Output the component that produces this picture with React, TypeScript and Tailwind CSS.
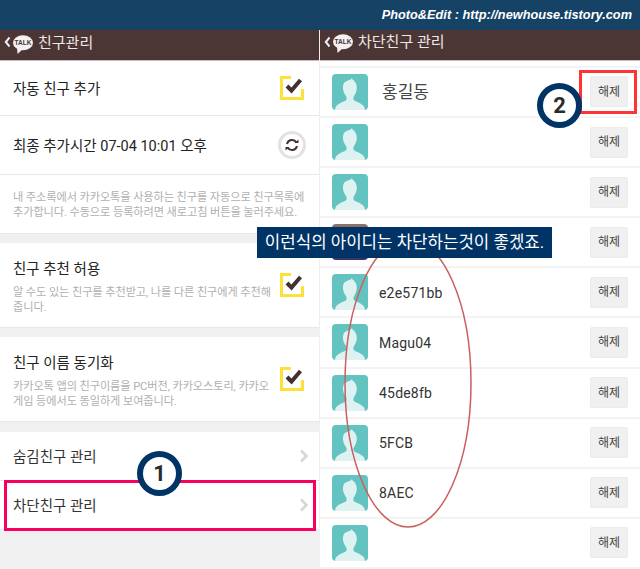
import type { ReactNode } from "react"

const KR = "font-['Roboto','Noto_Sans_CJK_KR',sans-serif]"

function TalkHeader({ title }: { title: string }) {
  return (
    <div className="flex h-[31px] items-center border-b border-[#c9bdbd] bg-[#4b3535] pb-1 pl-1">
      <svg width="7" height="12" viewBox="0 0 7 12" className="mb-[2px]">
        <path d="M5.500 1.500 L1.800 6 L5.500 10.500" fill="none" stroke="#eee" strokeWidth="2" />
      </svg>
      <svg width="22" height="20" viewBox="0 0 22 20" className="ml-[1px] mr-[4px] mt-[3px]">
        <ellipse cx="11" cy="7.800" rx="10" ry="7.500" fill="#f4f1f0" />
        <path d="M5 12 L5.500 19 L11 14 Z" fill="#f4f1f0" />
        <text
          x="11"
          y="10"
          textAnchor="middle"
          className="font-['Liberation_Sans',sans-serif] text-[6.500px] font-bold"
          fill="#4b3535"
        >
          TALK
        </text>
      </svg>
      <span className="text-[15px] leading-none text-[#ece8e7]">{title}</span>
    </div>
  )
}

function CheckMark() {
  return (
    <svg width="24" height="24" viewBox="0 0 24 24" className="shrink-0">
      <path d="M11 1.500 H1.500 V22.500 H22.500 V13" fill="none" stroke="#fde03a" strokeWidth="3" />
      <path d="M7 10 L11.500 14.500 L20.500 4" fill="none" stroke="#43302f" strokeWidth="4" />
    </svg>
  )
}

function RefreshIcon() {
  return (
    <svg width="28" height="28" viewBox="0 0 28 28" className="shrink-0">
      <circle cx="14" cy="14" r="12.500" fill="#fff" stroke="#e2e2e2" strokeWidth="3" />
      <path d="M9 13 A5.200 5.200 0 0 1 18.500 11.500" fill="none" stroke="#43302f" strokeWidth="2" />
      <path d="M19 15 A5.200 5.200 0 0 1 9.500 16.500" fill="none" stroke="#43302f" strokeWidth="2" />
      <path d="M16.500 12 H20.500 V8.500 Z" fill="#43302f" />
      <path d="M11.500 16 H7.500 V19.500 Z" fill="#43302f" />
    </svg>
  )
}

function Chevron() {
  return (
    <svg width="10" height="14" viewBox="0 0 10 14" className="shrink-0">
      <path d="M2 1.500 L7.500 7 L2 12.500" fill="none" stroke="#d6d6d6" strokeWidth="2.500" />
    </svg>
  )
}

function Card({ children }: { children: ReactNode }) {
  return <div className="border-b border-[#e8e8e8] bg-white">{children}</div>
}

function SettingRow({ title, lines }: { title: string; lines: string[] }) {
  return (
    <div className="flex h-[84px] items-center justify-between pl-[13px] pr-[15px]">
      <div className="w-[275px] self-start pt-[17px]">
        <div className="text-[14.500px] leading-[20px] text-[#222]">{title}</div>
        <div className="mt-[6px] whitespace-nowrap text-[11.200px] leading-[14.500px] tracking-[-0.1px] text-[#b0b0b0]">
          {lines[0]}
          <br />
          {lines[1]}
        </div>
      </div>
      <CheckMark />
    </div>
  )
}

function Avatar({ photo }: { photo?: boolean }) {
  if (photo) {
    return <div className="h-9 w-9 shrink-0 rounded-sm bg-gradient-to-b from-[#8d7468] via-[#6a5a80] to-[#3c2c6c]" />
  }
  return (
    <svg width="36" height="36" viewBox="0 0 36 36" className="shrink-0 rounded-sm bg-[#62c3c0]">
      <path
        d="M3 36 C3 31 8 29 13 27 C15 26 15 24 14 22 C11 18 10 13 12 9 C14 6 18 7 20 4 C20 6 22 6 23 8 C26 12 25 18 22 22 C21 24 21 26 23 27 C28 29 33 31 33 36 Z"
        fill="#dff2f2"
      />
    </svg>
  )
}

const friends = [
  { name: "홍길동", big: true },
  { name: "" },
  { name: "" },
  { name: "", photo: true },
  { name: "e2e571bb" },
  { name: "Magu04" },
  { name: "45de8fb" },
  { name: "5FCB" },
  { name: "8AEC" },
  { name: "" },
]

function FriendRow({ name, big, photo }: { name: string; big?: boolean; photo?: boolean }) {
  return (
    <div className="flex h-[50.300px] items-center border-b-2 border-[#f3f3f3] pl-3 pr-3">
      <Avatar photo={photo} />
      <span
        className={
          big
            ? "ml-[14px] pt-[1px] text-[17px] text-[#444]"
            : "ml-[11px] pt-[2px] text-[14px] tracking-[0.2px] text-[#333]"
        }
      >
        {name}
      </span>
      <button className="ml-auto h-[31px] w-[38px] rounded-[2px] border border-[#ebebeb] bg-[#f0f0f0] text-[12px] text-[#444]">
        해제
      </button>
    </div>
  )
}

function NumberBadge({ n, className }: { n: number; className: string }) {
  return (
    <div
      className={`absolute flex h-[45px] w-[45px] items-center justify-center rounded-full border-[6px] border-[#003366] bg-white text-[22px] font-bold text-[#2b2b2b] ${className}`}
    >
      {n}
    </div>
  )
}

export default function App() {
  return (
    <div className={`relative h-[569px] w-[640px] overflow-hidden bg-white ${KR}`}>
      <div className="flex h-[30px] items-center justify-end bg-[#154265] pr-2 font-['Liberation_Sans',sans-serif] text-[12.750px] font-bold italic text-white">
        Photo&amp;Edit : http://newhouse.tistory.com
      </div>

      <div className="flex h-[539px]">
        <div className="flex h-full w-[320px] flex-col border-r border-[#f0eeee] bg-[#f0f0f0]">
          <TalkHeader title="친구관리" />
          <Card>
            <div className="flex h-[55px] items-center justify-between border-b border-[#e8e8e8] pl-[13px] pr-[15px]">
              <span className="pt-[3px] text-[14.500px] text-[#222]">자동 친구 추가</span>
              <CheckMark />
            </div>
            <div className="flex h-[59px] items-center justify-between border-b border-[#e8e8e8] pl-[13px] pr-[13px]">
              <span className="pt-[3px] text-[14.500px] text-[#222]">최종 추가시간 07-04 10:01 오후</span>
              <RefreshIcon />
            </div>
            <div className="h-[58px] whitespace-nowrap pl-[13px] pt-[16px] text-[11.200px] leading-[14.500px] tracking-[-0.1px] text-[#b0b0b0]">
              내 주소록에서 카카오톡을 사용하는 친구를 자동으로 친구목록에
              <br />
              추가합니다. 수동으로 등록하려면 새로고침 버튼을 눌러주세요.
            </div>
          </Card>
          <div className="h-[9px]" />
          <Card>
            <SettingRow
              title="친구 추천 허용"
              lines={["알 수도 있는 친구를 추천받고, 나를 다른 친구에게 추천해", "줍니다."]}
            />
          </Card>
          <div className="h-[9px]" />
          <Card>
            <SettingRow
              title="친구 이름 동기화"
              lines={["카카오톡 앱의 친구이름을 PC버전, 카카오스토리, 카카오", "게임 등에서도 동일하게 보여줍니다."]}
            />
          </Card>
          <div className="h-[10px]" />
          <Card>
            <div className="flex h-[49px] items-center justify-between border-b border-[#e8e8e8] pl-[13px] pr-[10px]">
              <span className="pt-[3px] text-[14.500px] text-[#333]">숨김친구 관리</span>
              <Chevron />
            </div>
            <div className="flex h-[48px] items-center justify-between pl-[13px] pr-[10px]">
              <span className="pt-[3px] text-[14.500px] text-[#333]">차단친구 관리</span>
              <Chevron />
            </div>
          </Card>
        </div>

        <div className="flex h-full w-[320px] flex-col">
          <TalkHeader title="차단친구 관리" />
          <div className="h-[7px] border-b-2 border-[#f3f3f3]" />
          {friends.map((f, i) => (
            <FriendRow key={i} name={f.name} big={f.big} photo={f.photo} />
          ))}
        </div>
      </div>

      <svg width="130" height="292" viewBox="0 0 130 292" className="absolute left-[343px] top-[237px]">
        <ellipse cx="65" cy="146" rx="63" ry="144" fill="none" stroke="#c9605f" strokeWidth="1.500" />
      </svg>
      <div className="absolute left-[257px] top-[227px] flex h-[31px] w-[295px] items-center justify-center bg-[#003366] text-[16.800px] text-white">
        이런식의 아이디는 차단하는것이 좋겠죠.
      </div>

      <div className="absolute left-[4px] top-[480px] h-[51px] w-[312px] border-[3px] border-[#f80060]" />
      <div className="absolute left-[579px] top-[70px] h-[44px] w-[58px] border-[3px] border-[#ff3333]" />
      <NumberBadge n={1} className="left-[137px] top-[451px]" />
      <NumberBadge n={2} className="left-[537px] top-[83px]" />
    </div>
  )
}
